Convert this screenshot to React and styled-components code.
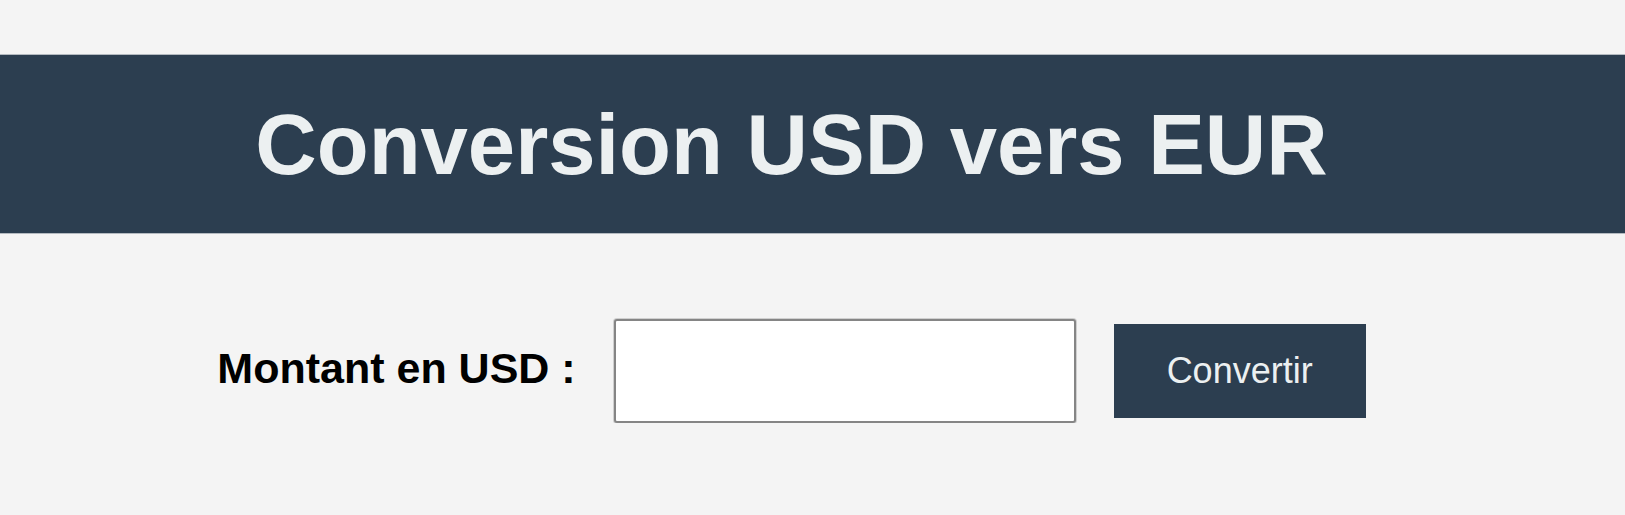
import React, { useState } from "react";
import styled, { createGlobalStyle } from "styled-components";

const GlobalStyle = createGlobalStyle`
  body {
    margin: 0;
    background-color: #f4f4f4;
    font-family: "Liberation Sans", Arial, sans-serif;
  }
`;

const App = () => {
  const [amount, setAmount] = useState("");
  return (
    <Page>
      <GlobalStyle />
      <Header>
        <Title>Conversion USD vers EUR</Title>
      </Header>
      <Form onSubmit={(e) => e.preventDefault()}>
        <Label htmlFor="usd">Montant en USD :</Label>
        <AmountInput
          id="usd"
          type="text"
          value={amount}
          onChange={(e) => setAmount(e.target.value)}
        />
        <ConvertButton type="submit">Convertir</ConvertButton>
      </Form>
    </Page>
  );
};

export default App;

const Page = styled.div`
  padding-top: 54px;
`;

const Header = styled.header`
  box-sizing: border-box;
  height: 180px;
  display: flex;
  align-items: center;
  justify-content: center;
  padding-right: 42px;
  background-color: #2c3e50;
  border-top: 1px solid #b4bac0;
  border-bottom: 1px solid #b4bac0;
`;

const Title = styled.h1`
  margin: 0;
  font-size: 85px;
  line-height: 1;
  font-weight: 700;
  color: #ecf0f1;
`;

const Form = styled.form`
  display: flex;
  align-items: center;
  justify-content: center;
  gap: 38px;
  margin-top: 85px;
  padding-right: 42px;
`;

const Label = styled.label`
  font-size: 43px;
  font-weight: 700;
  color: #000;
  margin-bottom: 6px;
`;

const AmountInput = styled.input`
  box-sizing: border-box;
  width: 462px;
  height: 104px;
  padding: 0 12px;
  font-size: 36px;
  font-family: "Liberation Sans", Arial, sans-serif;
  background-color: #fff;
  border: 2px solid #858585;
  border-radius: 3px;
  box-shadow: 0 0 0 1px #cfcfcf;
  outline: none;
`;

const ConvertButton = styled.button`
  box-sizing: border-box;
  width: 252px;
  height: 94px;
  border: none;
  border-radius: 0;
  background-color: #2c3e50;
  color: #ecf0f1;
  font-family: "Liberation Sans", Arial, sans-serif;
  font-size: 36px;
  cursor: pointer;
`;
